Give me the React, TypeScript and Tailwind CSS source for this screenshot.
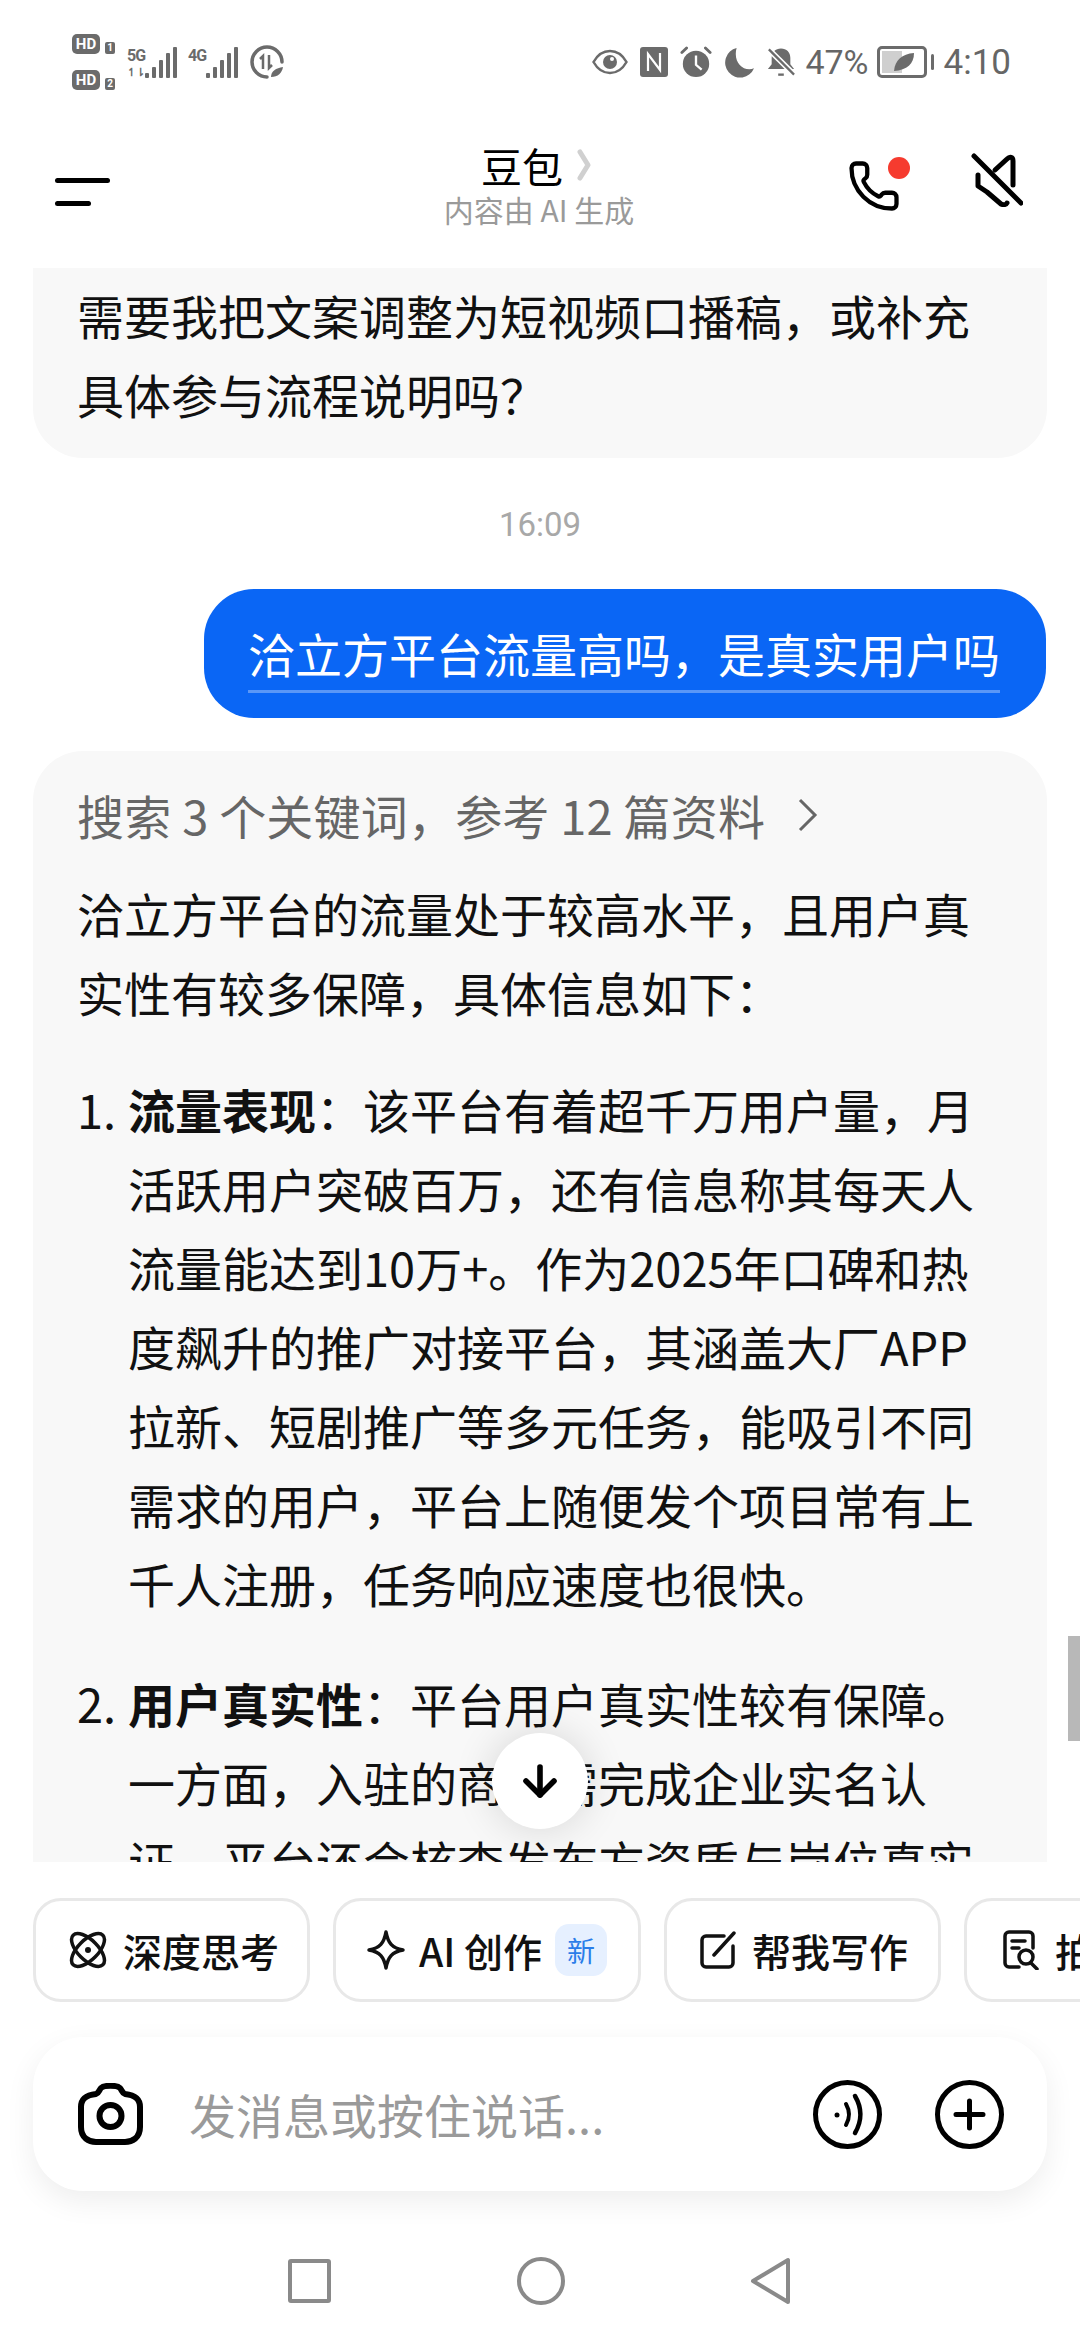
import React from 'react';
import { Phone, ArrowDown } from 'lucide-react';

const cjk = { fontFamily: '"Noto Sans CJK SC", "Noto Sans", sans-serif' };

const firstItem: React.ReactNode[] = [
  <><b className="font-bold">流量表现</b>：该平台有着超千万用户量，月</>,
  '活跃用户突破百万，还有信息称其每天人',
  '流量能达到10万+。作为2025年口碑和热',
  '度飙升的推广对接平台，其涵盖大厂APP',
  '拉新、短剧推广等多元任务，能吸引不同',
  '需求的用户，平台上随便发个项目常有上',
  '千人注册，任务响应速度也很快。',
];

const secondItem: React.ReactNode[] = [
  <><b className="font-bold">用户真实性</b>：平台用户真实性较有保障。</>,
  '一方面，入驻的商家需完成企业实名认',
  '证，平台还会核查发布方资质与岗位真实',
];

function Lines({ lines }: { lines: React.ReactNode[] }) {
  return (
    <div>
      {lines.map((line, i) => (
        <div key={i} className="whitespace-nowrap">{line}</div>
      ))}
    </div>
  );
}

function HdBadge({ n }: { n: string }) {
  return (
    <div className="flex items-end gap-[5px]">
      <span className="w-[28px] h-[20px] rounded-[5px] bg-[#6b6b6b] text-white text-[15px] leading-[20px] font-bold text-center">HD</span>
      <span className="w-[10px] h-[12px] rounded-[2px] bg-[#6b6b6b] text-white text-[10px] leading-[12px] font-bold text-center">{n}</span>
    </div>
  );
}

function Signal({ label, sub }: { label: string; sub?: string }) {
  const bars = [5, 11, 18, 25, 31];
  return (
    <div className="flex items-end h-[32px] w-[50px]">
      <div className="flex flex-col leading-none text-[#6b6b6b] font-bold w-[18px] shrink-0">
        <span className="text-[16px] tracking-[-1px]">{label}</span>
        {sub ? <span className="text-[11px] h-[11px] mt-[3px]">{sub}</span> : <span className="h-[14px]" />}
      </div>
      <div className="flex items-end gap-[3px]">
        {bars.map((h, i) => (
          <div key={i} className="w-[4px] bg-[#6b6b6b] rounded-[1px]" style={{ height: h }} />
        ))}
      </div>
    </div>
  );
}

function StatusBar() {
  return (
    <div className="h-[124px] shrink-0 flex items-center justify-between pl-[72px] pr-[69px] text-[#666]" style={{ fontFamily: '"Roboto", sans-serif' }}>
      <div className="flex items-center">
        <div className="flex flex-col gap-[16px]">
          <HdBadge n="1" />
          <HdBadge n="2" />
        </div>
        <div className="ml-[12px] flex gap-[11px]">
          <Signal label="5G" sub="↿⇂" />
          <Signal label="4G" />
        </div>
        <svg className="ml-[12px]" width="34" height="34" viewBox="0 0 34 34" fill="none">
          <path d="M17 32A15 15 0 1 1 32 17" stroke="#6b6b6b" strokeWidth="3.5" strokeLinecap="round" />
          <path d="M13 24V11l-3 3M19 10v13l3-3" stroke="#6b6b6b" strokeWidth="2.5" />
          <path d="M21 32c0-6 5-9 12-10-1 6-5 10-12 10Z" fill="#6b6b6b" />
        </svg>
      </div>
      <div className="flex items-center">
        <svg width="36" height="26" viewBox="0 0 36 26" fill="none">
          <path d="M1.5 13C6 5 11 2 18 2s12 3 16.5 11C30 21 25 24 18 24S6 21 1.5 13Z" stroke="#6b6b6b" strokeWidth="2.5" />
          <circle cx="18" cy="13" r="7" fill="#6b6b6b" />
          <circle cx="20" cy="10" r="2" fill="#fff" />
        </svg>
        <svg className="ml-[12px]" width="28" height="30" viewBox="0 0 28 30" fill="none">
          <rect width="28" height="30" rx="3" fill="#6b6b6b" />
          <path d="M8 24V7l12 16V6" stroke="#fff" strokeWidth="2.2" />
        </svg>
        <svg className="ml-[12px]" width="32" height="32" viewBox="0 0 34 34" fill="none">
          <circle cx="17" cy="19" r="14" fill="#6b6b6b" />
          <path d="M17 10v10l6 5" stroke="#fff" strokeWidth="2.5" />
          <path d="M2 7l5-5M32 7l-5-5" stroke="#6b6b6b" strokeWidth="3" strokeLinecap="round" />
        </svg>
        <svg className="ml-[12px]" width="31" height="31" viewBox="0 0 32 32" fill="none">
          <path d="M13 1A15.500 15.500 0 1 0 31 22C20 26 9 16 13 1Z" fill="#6b6b6b" />
        </svg>
        <svg className="ml-[12px]" width="28" height="31" viewBox="0 0 30 32" fill="none">
          <path d="M15 1c6 0 10 4 10 10v7l4 5H1l4-5v-7c0-6 4-10 10-10Z" fill="#6b6b6b" />
          <path d="M12 29h6" stroke="#6b6b6b" strokeWidth="2.5" />
          <path d="M2 2l27 27" stroke="#fff" strokeWidth="6" />
          <path d="M2 2l27 27" stroke="#6b6b6b" strokeWidth="2.5" />
        </svg>
        <span className="ml-[10px] text-[34px] leading-none">47%</span>
        <div className="ml-[8px] w-[50px] h-[32px] rounded-[5px] border-[3px] border-[#6b6b6b] p-[2px] relative">
          <div className="w-[20px] h-full bg-[#cfcfcf]" />
          <svg className="absolute left-[13px] top-[3px]" width="22" height="20" viewBox="0 0 22 20">
            <path d="M1 19C2 8 9 2 21 1c0 11-7 17-20 18Z" fill="#6b6b6b" />
          </svg>
        </div>
        <div className="ml-[4px] w-[3px] h-[16px] bg-[#6b6b6b] rounded-full" />
        <span className="ml-[10px] text-[35px] leading-none">4:10</span>
      </div>
    </div>
  );
}

function Header() {
  return (
    <div className="h-[144px] shrink-0 grid grid-cols-[1fr_auto_1fr] pl-[55px] pr-[57px]" style={cjk}>
      <div className="flex flex-col gap-[18px] pt-[54px]">
        <div className="w-[55px] h-[5px] rounded-full bg-black" />
        <div className="w-[36px] h-[5px] rounded-full bg-black" />
      </div>
      <div className="flex flex-col items-center pt-[15px]">
        <div className="flex items-center text-[41px] leading-[52px] text-black ml-[-6px]">
          豆包
          <svg className="ml-[14px]" width="14" height="32" viewBox="0 0 14 32" fill="none">
            <path d="M3 3l8 13-8 13" stroke="#d0d0d0" strokeWidth="5" strokeLinecap="round" strokeLinejoin="round" />
          </svg>
        </div>
        <div className="text-[30px] leading-[36px] text-[#9a9a9a]">内容由 AI 生成</div>
      </div>
      <div className="flex justify-end gap-[72px] pt-[30px]">
        <div className="relative w-[52px] h-[52px] mt-[5px]">
          <Phone size={54} strokeWidth={1.9} color="#000" />
          <div className="absolute left-[41px] top-[-2px] w-[22px] h-[22px] rounded-full bg-[#f63b2f]" />
        </div>
        <svg className="mt-[-1px]" width="52" height="54" viewBox="0 0 52 54" fill="none">
          <path d="M3 3l47 47" stroke="#000" strokeWidth="5" strokeLinecap="round" />
          <path d="M24 17L36 6c3-3 6-2 6 2v24" stroke="#000" strokeWidth="5" strokeLinejoin="round" strokeLinecap="round" />
          <path d="M7 22v11l9 6 14 12c2 1 5 1 6-1" stroke="#000" strokeWidth="5" strokeLinejoin="round" strokeLinecap="round" />
        </svg>
      </div>
    </div>
  );
}

function Messages() {
  return (
    <div className="flex-1 min-h-0 relative overflow-hidden text-[47px] leading-[79px] text-[#111]" style={cjk}>
      <div className="mx-[33px] bg-[#f8f8f8] rounded-b-[50px] pl-[44px] pt-[7px] pb-[25px]">
        <Lines lines={['需要我把文案调整为短视频口播稿，或补充', '具体参与流程说明吗？']} />
      </div>

      <div className="mt-[42px] h-[50px] text-center text-[33px] leading-[50px] text-[#a8a8a8]" style={{ fontFamily: '"Roboto", sans-serif' }}>16:09</div>

      <div className="mt-[39px] ml-[204px] mr-[34px] h-[129px] rounded-[50px] bg-[#0a66f5] pl-[44px] pt-[24px] text-white">
        <div className="inline-block whitespace-nowrap leading-[64px] pb-[5px] border-b-[3px] border-[#5a97f7]">洽立方平台流量高吗，是真实用户吗</div>
      </div>

      <div className="mt-[33px] mx-[33px] bg-[#f8f8f8] rounded-t-[50px] pl-[44px] pt-[24px] pb-[40px]">
        <div className="flex items-center text-[#666] whitespace-nowrap tracking-[0.2px]">
          搜索 3 个关键词，参考 12 篇资料
          <svg className="ml-[32px]" width="22" height="34" viewBox="0 0 22 34" fill="none">
            <path d="M3 2l15 15L3 32" stroke="#666" strokeWidth="3" />
          </svg>
        </div>
        <div className="mt-[19px]">
          <Lines lines={['洽立方平台的流量处于较高水平，且用户真', '实性有较多保障，具体信息如下：']} />
        </div>
        <div className="mt-[38px] flex">
          <span className="w-[51px] shrink-0">1.</span>
          <Lines lines={firstItem} />
        </div>
        <div className="mt-[41px] flex">
          <span className="w-[51px] shrink-0">2.</span>
          <Lines lines={secondItem} />
        </div>
      </div>

      <div className="absolute right-0 top-[1368px] w-[12px] h-[105px] bg-[#b8b8b8]" />
      <div className="absolute left-[492px] top-[1465px] w-[96px] h-[96px] rounded-full bg-white shadow-[0_0_40px_rgba(0,0,0,0.14)] flex items-center justify-center">
        <ArrowDown size={48} strokeWidth={2.8} color="#000" />
      </div>
    </div>
  );
}

function Chip({ icon, label, badge, className }: { icon: React.ReactNode; label: string; badge?: boolean; className: string }) {
  return (
    <div className={`h-[104px] shrink-0 rounded-[28px] border-[3px] border-[#e8e8e8] flex items-center text-[39px] font-medium text-[#111] whitespace-nowrap ${className}`}>
      {icon}
      <span>{label}</span>
      {badge && (
        <span className="w-[52px] h-[52px] rounded-[14px] bg-[#e6f0ff] text-[#2b7de9] text-[28px] font-normal flex items-center justify-center">新</span>
      )}
    </div>
  );
}

function Chips() {
  return (
    <div className="mt-[36px] pl-[33px] flex gap-[23px] overflow-hidden shrink-0" style={cjk}>
      <Chip
        className="w-[277px] pl-[33px] gap-[16px]"
        label="深度思考"
        icon={
          <svg width="38" height="38" viewBox="0 0 38 38" fill="none" stroke="#111" strokeWidth="3.5">
            <ellipse cx="19" cy="19" rx="21" ry="10" transform="rotate(45 19 19)" />
            <ellipse cx="19" cy="19" rx="21" ry="10" transform="rotate(-45 19 19)" />
            <circle cx="19" cy="19" r="3" fill="#111" stroke="none" />
          </svg>
        }
      />
      <Chip
        className="w-[308px] pl-[30px] gap-[13px]"
        label="AI 创作"
        badge
        icon={
          <svg width="40" height="42" viewBox="0 0 40 42" fill="none">
            <path d="M20 3c2 11 6 16 17 18-11 2-15 7-17 18-2-11-6-16-17-18 11-2 15-7 17-18Z" stroke="#111" strokeWidth="3.500" strokeLinejoin="round" />
          </svg>
        }
      />
      <Chip
        className="w-[277px] pl-[33px] gap-[16px]"
        label="帮我写作"
        icon={
          <svg width="36" height="38" viewBox="0 0 36 38" fill="none" stroke="#111" strokeWidth="3.5" strokeLinecap="round">
            <path d="M24 5H6a4 4 0 0 0-4 4v23a4 4 0 0 0 4 4h23a4 4 0 0 0 4-4V15" />
            <path d="M14 24L34 2" />
          </svg>
        }
      />
      <Chip
        className="w-[277px] pl-[36px] gap-[16px]"
        label="拍题答疑"
        icon={
          <svg width="36" height="40" viewBox="0 0 36 40" fill="none" stroke="#111" strokeWidth="3.5" strokeLinecap="round">
            <path d="M16 37H6a4 4 0 0 1-4-4V6a4 4 0 0 1 4-4h20a4 4 0 0 1 4 4v12" />
            <path d="M9 11h13M9 18h7" />
            <circle cx="23" cy="27" r="7" />
            <path d="M28 33l6 6" />
          </svg>
        }
      />
    </div>
  );
}

function InputBar() {
  return (
    <div className="mt-[35px] mx-[33px] h-[154px] shrink-0 rounded-[50px] bg-white shadow-[0_10px_30px_rgba(0,0,0,0.07)] flex items-center pl-[45px] pr-[43px]" style={cjk}>
      <svg width="65" height="62" viewBox="0 0 65 62" fill="none" stroke="#000" strokeWidth="6">
        <path d="M23 5c3-3 16-3 19 0 2 2 2 5 5 6 9 1 15 4 15 13v20c0 11-8 15-15 15H18C11 59 3 55 3 44V24c0-9 6-12 15-13 3-1 3-4 5-6Z" strokeLinejoin="round" />
        <circle cx="32.500" cy="33" r="11" />
      </svg>
      <span className="ml-[46px] flex-1 text-[47px] text-[#9a9a9a] whitespace-nowrap">发消息或按住说话...</span>
      <svg width="69" height="69" viewBox="0 0 69 69" fill="none" stroke="#000" strokeWidth="5" strokeLinecap="round">
        <circle cx="34.500" cy="34.500" r="32" />
        <circle cx="24" cy="35" r="2.500" fill="#000" stroke="none" />
        <path d="M33 24c4 7 4 14 0 21" strokeWidth="4" />
        <path d="M42 16c7 12 7 25 0 37" strokeWidth="4.500" />
      </svg>
      <svg className="ml-[53px]" width="69" height="69" viewBox="0 0 69 69" fill="none" stroke="#000" strokeWidth="5" strokeLinecap="round">
        <circle cx="34.500" cy="34.500" r="32" />
        <path d="M34.500 21v27M21 34.500h27" />
      </svg>
    </div>
  );
}

function NavBar() {
  return (
    <div className="flex-1 flex items-start pt-[66px] pl-[288px]">
      <div className="w-[43px] h-[44px] mt-[2px] rounded-[3px] border-[4px] border-[#8a8a8a]" />
      <div className="ml-[186px] w-[48px] h-[48px] rounded-full border-[4px] border-[#8a8a8a]" />
      <svg className="ml-[185px]" width="42" height="48" viewBox="0 0 42 48" fill="none">
        <path d="M38 3v42L3 24 38 3Z" stroke="#8a8a8a" strokeWidth="4" strokeLinejoin="round" />
      </svg>
    </div>
  );
}

export default function App() {
  return (
    <div className="w-[1080px] h-[2340px] bg-white flex flex-col overflow-hidden">
      <StatusBar />
      <Header />
      <div className="h-[1594px] shrink-0 flex flex-col">
        <Messages />
      </div>
      <Chips />
      <InputBar />
      <NavBar />
    </div>
  );
}
